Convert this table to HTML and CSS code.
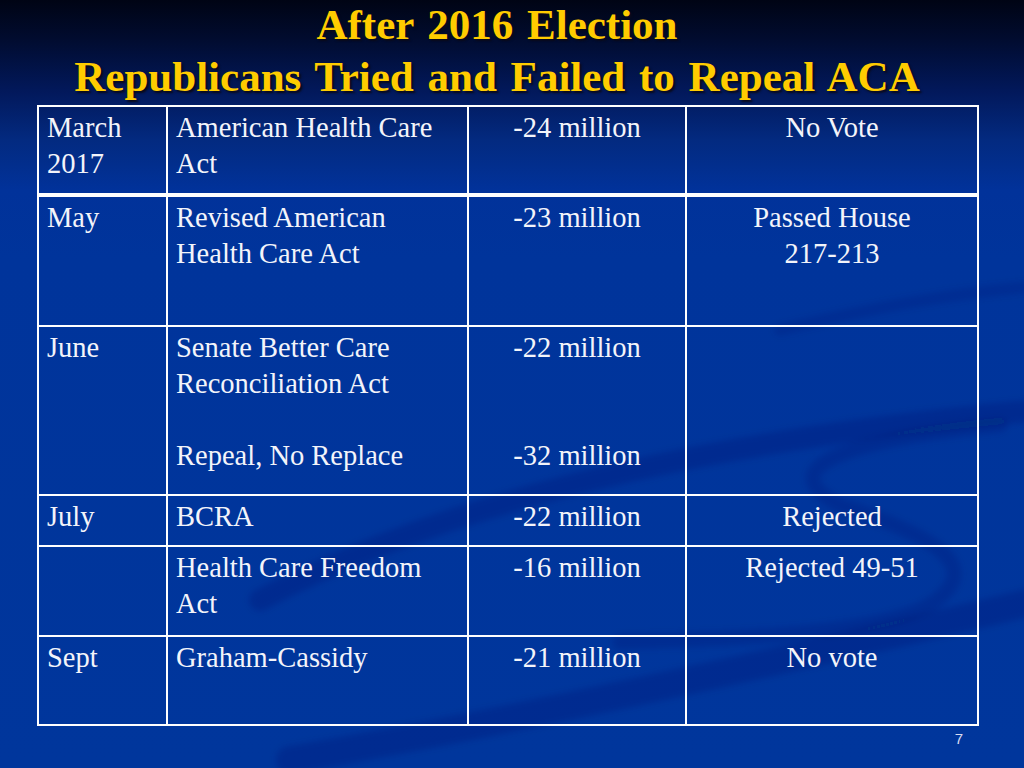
FILE: index.html
```html
<!DOCTYPE html>
<html>
<head>
<meta charset="utf-8">
<title>After 2016 Election</title>
<link rel="stylesheet" href="styles.css">
</head>
<body>
<div class="slide">
  <svg class="swoosh" width="1024" height="768" viewBox="0 0 1024 768" aria-hidden="true">
    <defs>
      <filter id="soft" x="-10%" y="-10%" width="120%" height="120%"><feGaussianBlur stdDeviation="3"/></filter>
    </defs>
    <g filter="url(#soft)" fill="none" stroke-linecap="round">
      <path d="M 260 600 C 440 505, 700 440, 1040 410" stroke="rgba(0,20,95,0.2)" stroke-width="22"/>
      <path d="M 1000 425 C 840 440, 770 470, 840 505 C 930 535, 990 565, 930 605 C 880 632, 760 638, 620 642" stroke="rgba(0,20,95,0.17)" stroke-width="15"/>
      <path d="M 290 760 C 510 722, 780 662, 1040 600" stroke="rgba(0,20,95,0.2)" stroke-width="28"/>
      <path d="M 780 330 C 880 306, 955 293, 1040 286" stroke="rgba(0,20,95,0.14)" stroke-width="12"/>
    </g>
  </svg>

  <h1 class="title">
    <span class="title-line">After 2016 Election</span>
    <span class="title-line">Republicans Tried and Failed to Repeal ACA</span>
  </h1>

  <div class="grid">
    <div class="cell">March<br>2017</div>
    <div class="cell">American Health Care<br>Act</div>
    <div class="cell center">-24 million</div>
    <div class="cell center">No Vote</div>

    <div class="cell thick">May</div>
    <div class="cell thick">Revised American<br>Health Care Act</div>
    <div class="cell thick center">-23 million</div>
    <div class="cell thick center">Passed House<br>217-213</div>

    <div class="cell">June</div>
    <div class="cell">Senate Better Care<br>Reconciliation Act<br><br>Repeal, No Replace</div>
    <div class="cell center">-22 million<br><br><br>-32 million</div>
    <div class="cell center"></div>

    <div class="cell">July</div>
    <div class="cell">BCRA</div>
    <div class="cell center">-22 million</div>
    <div class="cell center">Rejected</div>

    <div class="cell"></div>
    <div class="cell">Health Care Freedom<br>Act</div>
    <div class="cell center">-16 million</div>
    <div class="cell center">Rejected 49-51</div>

    <div class="cell">Sept</div>
    <div class="cell">Graham-Cassidy</div>
    <div class="cell center">-21 million</div>
    <div class="cell center">No vote</div>
  </div>

  <div class="pagenum">7</div>
</div>
</body>
</html>
```

FILE: styles.css
```css
html, body {
  margin: 0;
  padding: 0;
  background: #00349a;
}

.slide {
  position: relative;
  width: 1024px;
  height: 768px;
  overflow: hidden;
  background: linear-gradient(to bottom,
    #000414 0px,
    #010c30 40px,
    #02185a 90px,
    #032a80 140px,
    #01329a 190px,
    #00349b 260px,
    #00369c 768px);
}

.swoosh {
  position: absolute;
  left: 0;
  top: 0;
  z-index: 0;
}

.title {
  position: relative;
  z-index: 1;
  margin: -1px 67px 0 37px;
  height: 106px;
  font-family: "Liberation Serif", "Times New Roman", serif;
  font-weight: bold;
  font-size: 43px;
  line-height: 52px;
  word-spacing: 3px;
  color: #ffcc00;
  text-align: center;
  text-shadow: 2px 2px 2px #0a0a1a;
}

.title-line {
  display: block;
  white-space: nowrap;
}

.grid {
  position: relative;
  z-index: 1;
  display: grid;
  box-sizing: border-box;
  width: 942px;
  margin-left: 37px;
  grid-template-columns: 129px 301px 218px 292px;
  grid-template-rows: 88px 132px 169px 51px 90px 89px;
  border-right: 2px solid #fff;
  border-bottom: 2px solid #fff;
  font-family: "Liberation Serif", "Times New Roman", serif;
  font-size: 28.5px;
  line-height: 36px;
  color: #f3f4fa;
}

.cell {
  box-sizing: border-box;
  border-left: 2px solid #fff;
  border-top: 2px solid #fff;
  padding: 3px 8px 0 8px;
  white-space: nowrap;
}

.cell.thick {
  border-top-width: 4px;
}

.cell.center {
  text-align: center;
}

.pagenum {
  position: relative;
  z-index: 1;
  width: 963px;
  margin-top: 4px;
  text-align: right;
  font-family: "Liberation Sans", Arial, sans-serif;
  font-size: 15px;
  line-height: 17px;
  color: #d8dcf0;
}
```
